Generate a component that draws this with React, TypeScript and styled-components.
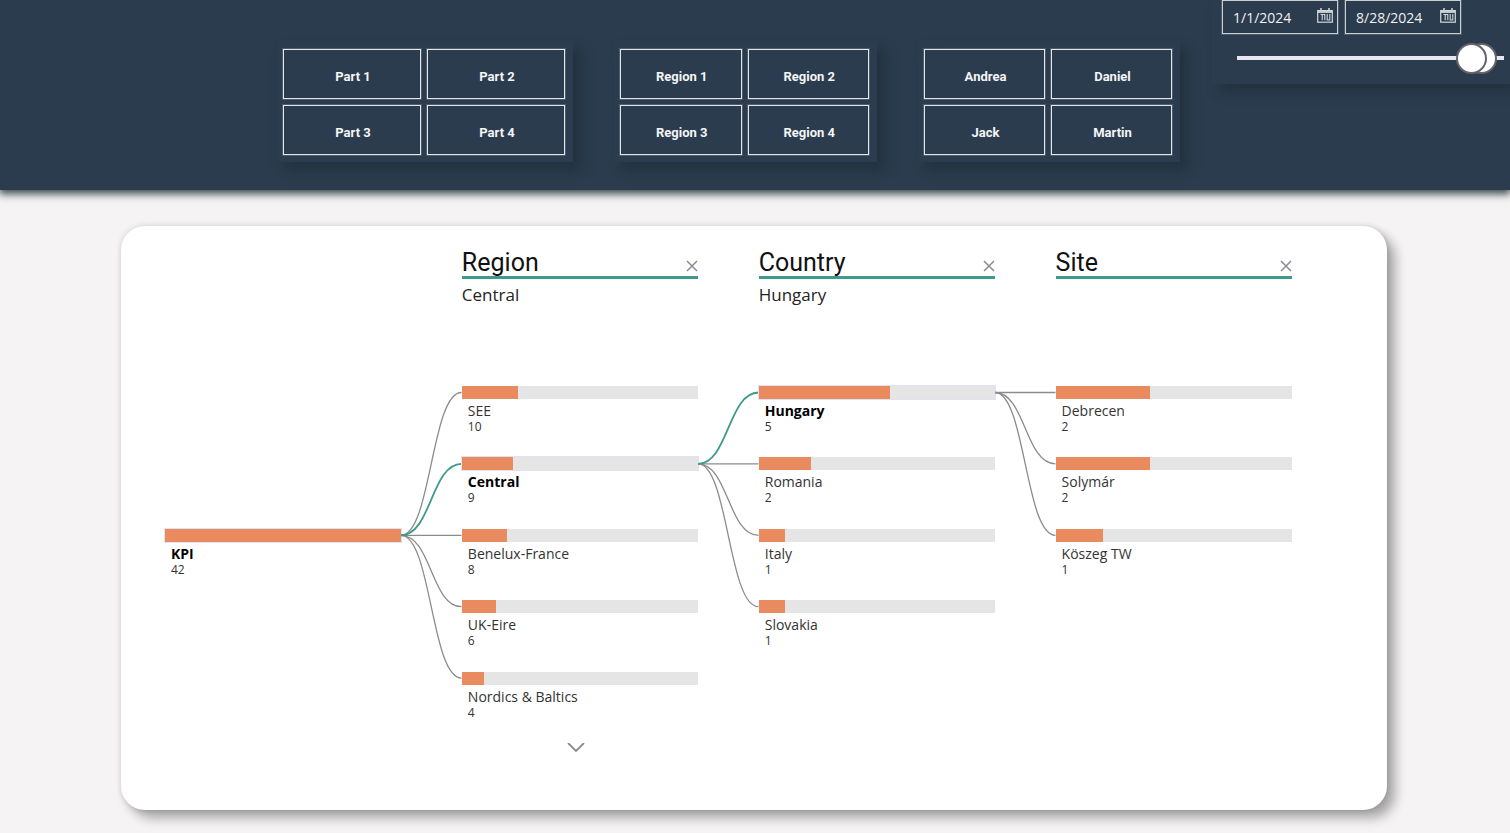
import React, { useState } from "react";
import styled, { createGlobalStyle } from "styled-components";

const UI_FONT = `"Open Sans", "Noto Sans", sans-serif`;
const DISPLAY_FONT = `Roboto, "Liberation Sans", sans-serif`;
const NAVY = "#2b3c4e";
const TEAL = "#3f9a8c";
const ROWS = 5;
const TREE_HEIGHT = 357;
const BAR_HEIGHT = 13;

const GlobalStyle = createGlobalStyle`
  *, *::before, *::after { box-sizing: border-box; }
  body {
    margin: 0;
    background: #f5f3f4;
    font-family: ${UI_FONT};
    color: #252423;
  }
  button, input { font: inherit; color: inherit; }
`;

const Page = styled.div`
  min-height: 100vh;
  overflow: hidden;
`;

const Header = styled.header`
  display: grid;
  grid-template-columns: 277fr 296fr 41fr 263fr 41fr 262fr 32fr 298fr;
  align-items: start;
  height: 190px;
  background: ${NAVY};
  box-shadow: 0 3px 8px 1px rgba(22, 42, 44, 0.85);
`;

const SlicerPanel = styled.fieldset<{ $column: number }>`
  grid-column: ${(p) => p.$column};
  display: grid;
  grid-template-columns: 1fr 1fr;
  gap: 6px;
  min-width: 0;
  margin: 41px 0 0;
  padding: 8px 8px 7px 6px;
  border: 0;
  background: ${NAVY};
  box-shadow: 8px 8px 12px rgba(26, 34, 40, 0.4);
`;

const Tile = styled.button`
  height: 50px;
  padding: 5px 0 0 2px;
  border: 1px solid #e4e7ea;
  outline: 1px solid rgba(255, 255, 255, 0.16);
  outline-offset: 0;
  background: transparent;
  color: #f4f5f6;
  font-family: ${DISPLAY_FONT};
  font-size: 13px;
  font-weight: 700;
  line-height: 20px;
  cursor: pointer;
`;

const DatePanel = styled.fieldset`
  grid-column: 8;
  min-width: 0;
  height: 84px;
  margin: 0;
  padding: 0 6px 0 10px;
  border: 0;
  background: ${NAVY};
  box-shadow: 8px 8px 12px rgba(26, 34, 40, 0.4);
`;

const DateRow = styled.div`
  display: flex;
  gap: 7px;
`;

const DateBox = styled.label`
  display: flex;
  align-items: center;
  justify-content: space-between;
  width: 116px;
  height: 34px;
  padding: 0 4px 0 10px;
  border: 1px solid #c9ced2;
  outline: 1px solid rgba(255, 255, 255, 0.16);
  color: #f1f1f1;
`;

const DateInput = styled.input`
  width: 76px;
  padding: 2px 0 0;
  border: 0;
  outline: 0;
  background: transparent;
  font-size: 14px;
  line-height: 20px;
`;

const CalendarSvg = styled.svg`
  width: 16px;
  height: 20px;
  flex: none;
`;

const RangeStack = styled.div`
  display: grid;
  align-items: center;
  height: 30px;
  margin: 9px 0 0 15px;
  background: linear-gradient(#e9e6f3, #e9e6f3) center / 100% 4px no-repeat;
`;

const RangeInput = styled.input`
  grid-area: 1 / 1;
  appearance: none;
  width: 100%;
  height: 30px;
  margin: 0;
  background: transparent;
  pointer-events: none;

  &::-webkit-slider-thumb {
    appearance: none;
    width: 31px;
    height: 31px;
    border: 2px solid #67626b;
    border-radius: 50%;
    background: #fff;
    pointer-events: auto;
    cursor: pointer;
  }
`;

const Main = styled.main`
  display: grid;
  grid-template-columns: 121fr 1266fr 123fr;
  padding: 36px 0 23px;
`;

const Card = styled.section`
  grid-column: 2;
  display: grid;
  grid-template-columns: 473fr 121fr 473fr 121fr 473fr 121fr 473fr;
  align-items: start;
  min-height: 584px;
  padding: 20px 95px 54px 44px;
  border-radius: 24px;
  background: #fff;
  box-shadow: 8px 8px 12px rgba(0, 0, 0, 0.32), 0 0 6px rgba(0, 0, 0, 0.14);
`;

const Level = styled.section`
  min-width: 0;
`;

const LevelHead = styled.header`
  height: 140px;
`;

const TitleRow = styled.div`
  display: flex;
  align-items: flex-end;
  justify-content: space-between;
  height: 33px;
  border-bottom: 3px solid ${TEAL};
`;

const Title = styled.h2`
  margin: 0;
  font-family: ${DISPLAY_FONT};
  font-size: 25px;
  font-weight: 400;
  line-height: 26px;
  color: #111;
`;

const Selection = styled.p`
  margin: 4px 0 0;
  font-size: 17px;
  line-height: 24px;
`;

const IconButton = styled.button`
  display: block;
  padding: 0;
  border: 0;
  background: transparent;
  color: #8b8994;
  cursor: pointer;

  svg { display: block; }
`;

const CloseButton = styled(IconButton)`
  padding-bottom: 4px;
`;

const MoreButton = styled(IconButton)`
  width: 100%;
  padding-right: 8px;

  svg { margin: 0 auto; }
`;

const NodeList = styled.ul`
  display: grid;
  grid-template-rows: repeat(${ROWS}, 1fr);
  height: ${TREE_HEIGHT}px;
  margin: 0;
  padding: 0;
  list-style: none;
`;

const NodeItem = styled.li<{ $row: number }>`
  grid-row: ${(p) => p.$row};
  min-height: 0;
`;

const NodeButton = styled.button`
  display: block;
  width: 100%;
  padding: 0;
  border: 0;
  background: transparent;
  text-align: left;
  cursor: pointer;
`;

const Track = styled.span<{ $selected: boolean }>`
  display: block;
  height: ${BAR_HEIGHT}px;
  background: #e5e5e5;
  box-shadow: ${(p) => (p.$selected ? "0 0 0 1px #e3e1ee" : "none")};
`;

const Fill = styled.span`
  display: block;
  height: 100%;
  background: #ea8a5f;
`;

const NodeName = styled.span<{ $selected: boolean }>`
  display: block;
  padding: 1px 0 0 6px;
  font-size: 14px;
  line-height: 21px;
  font-weight: ${(p) => (p.$selected ? 700 : 400)};
  color: ${(p) => (p.$selected ? "#000" : "#333")};
`;

const NodeValue = styled.span`
  display: block;
  padding-left: 6px;
  font-size: 12px;
  line-height: 12px;
  color: #333;
`;

const LinkSvg = styled.svg`
  display: block;
  width: 100%;
  height: ${TREE_HEIGHT}px;
  margin-top: 140px;
  overflow: visible;
`;

type TreeNode = { name: string; value: number; row: number; selected?: boolean };
type TreeLevel = { title?: string; selection?: string; total: number; nodes: TreeNode[]; more?: boolean };

const levels: TreeLevel[] = [
  { total: 42, nodes: [{ name: "KPI", value: 42, row: 3, selected: true }] },
  {
    title: "Region",
    selection: "Central",
    total: 42,
    more: true,
    nodes: [
      { name: "SEE", value: 10, row: 1 },
      { name: "Central", value: 9, row: 2, selected: true },
      { name: "Benelux-France", value: 8, row: 3 },
      { name: "UK-Eire", value: 6, row: 4 },
      { name: "Nordics & Baltics", value: 4, row: 5 },
    ],
  },
  {
    title: "Country",
    selection: "Hungary",
    total: 9,
    nodes: [
      { name: "Hungary", value: 5, row: 1, selected: true },
      { name: "Romania", value: 2, row: 2 },
      { name: "Italy", value: 1, row: 3 },
      { name: "Slovakia", value: 1, row: 4 },
    ],
  },
  {
    title: "Site",
    total: 5,
    nodes: [
      { name: "Debrecen", value: 2, row: 1 },
      { name: "Solymár", value: 2, row: 2 },
      { name: "Köszeg TW", value: 1, row: 3 },
    ],
  },
];

const slicers = [
  { label: "Part", column: 2, items: ["Part 1", "Part 2", "Part 3", "Part 4"] },
  { label: "Region", column: 4, items: ["Region 1", "Region 2", "Region 3", "Region 4"] },
  { label: "Person", column: 6, items: ["Andrea", "Daniel", "Jack", "Martin"] },
];

const rowCentre = (row: number) => ((row - 1) * TREE_HEIGHT) / ROWS + BAR_HEIGHT / 2;

function Links({ from, to }: { from: TreeLevel; to: TreeLevel }) {
  const source = from.nodes.find((n) => n.selected);
  if (!source) return <span />;
  const y0 = rowCentre(source.row);
  const ordered = [...to.nodes].sort((a, b) => Number(!!a.selected) - Number(!!b.selected));
  return (
    <LinkSvg viewBox={`0 0 60 ${TREE_HEIGHT}`} preserveAspectRatio="none" aria-hidden="true">
      {ordered.map((n) => {
        const y1 = rowCentre(n.row);
        return (
          <path
            key={n.name}
            d={`M0 ${y0}C30 ${y0} 30 ${y1} 60 ${y1}`}
            fill="none"
            stroke={n.selected ? TEAL : "#8c8c8c"}
            strokeWidth={n.selected ? 1.8 : 1.3}
            vectorEffect="non-scaling-stroke"
          />
        );
      })}
    </LinkSvg>
  );
}

function TreeColumn({ level }: { level: TreeLevel }) {
  return (
    <Level>
      <LevelHead>
        {level.title && (
          <TitleRow>
            <Title>{level.title}</Title>
            <CloseButton type="button" aria-label={`Remove ${level.title}`}>
              <svg width="12" height="12" viewBox="0 0 12 12" fill="none" stroke="currentColor" strokeWidth="1.5">
                <path d="M1 1L11 11M11 1L1 11" />
              </svg>
            </CloseButton>
          </TitleRow>
        )}
        {level.selection && <Selection>{level.selection}</Selection>}
      </LevelHead>
      <NodeList>
        {level.nodes.map((n) => (
          <NodeItem key={n.name} $row={n.row}>
            <NodeButton type="button" aria-pressed={!!n.selected}>
              <Track $selected={!!n.selected}>
                <Fill style={{ width: `${(n.value / level.total) * 100}%` }} />
              </Track>
              <NodeName $selected={!!n.selected}>{n.name}</NodeName>
              <NodeValue>{n.value}</NodeValue>
            </NodeButton>
          </NodeItem>
        ))}
      </NodeList>
      {level.more && (
        <MoreButton type="button" aria-label="Show more">
          <svg width="18" height="10" viewBox="0 0 18 10" fill="none" stroke="currentColor" strokeWidth="1.8">
            <path d="M1 0L9 8L17 0" />
          </svg>
        </MoreButton>
      )}
    </Level>
  );
}

function CalendarIcon() {
  return (
    <CalendarSvg viewBox="0 0 16 20" fill="none" stroke="#d3d8dc" aria-hidden="true">
      <rect x="0.7" y="3.6" width="14.6" height="11.6" strokeWidth="1.2" />
      <path d="M1 5H15" strokeWidth="1.8" />
      <path d="M4 1V4M12 1V4" strokeWidth="1.5" />
      <path d="M3.5 7.5H5.2V13.2M7.8 7V13.2M10.2 7V13H12.8V7M5.2 7.5H7.8" strokeWidth="1.1" />
    </CalendarSvg>
  );
}

export default function App() {
  const [start, setStart] = useState("1/1/2024");
  const [end, setEnd] = useState("8/28/2024");
  const [low, setLow] = useState(93);
  const [high, setHigh] = useState(97);

  return (
    <Page>
      <GlobalStyle />
      <Header>
        {slicers.map((s) => (
          <SlicerPanel key={s.label} $column={s.column} aria-label={s.label}>
            {s.items.map((item) => (
              <Tile key={item} type="button">
                {item}
              </Tile>
            ))}
          </SlicerPanel>
        ))}
        <DatePanel aria-label="Date range">
          <DateRow>
            <DateBox>
              <DateInput aria-label="Start date" value={start} onChange={(e) => setStart(e.target.value)} />
              <CalendarIcon />
            </DateBox>
            <DateBox>
              <DateInput aria-label="End date" value={end} onChange={(e) => setEnd(e.target.value)} />
              <CalendarIcon />
            </DateBox>
          </DateRow>
          <RangeStack>
            <RangeInput
              type="range"
              aria-label="Range end"
              value={high}
              onChange={(e) => setHigh(Math.max(low, Number(e.target.value)))}
            />
            <RangeInput
              type="range"
              aria-label="Range start"
              value={low}
              onChange={(e) => setLow(Math.min(high, Number(e.target.value)))}
            />
          </RangeStack>
        </DatePanel>
      </Header>
      <Main>
        <Card aria-label="KPI breakdown">
          {levels.map((level, i) => (
            <React.Fragment key={level.title ?? "root"}>
              {i > 0 && <Links from={levels[i - 1]} to={level} />}
              <TreeColumn level={level} />
            </React.Fragment>
          ))}
        </Card>
      </Main>
    </Page>
  );
}
